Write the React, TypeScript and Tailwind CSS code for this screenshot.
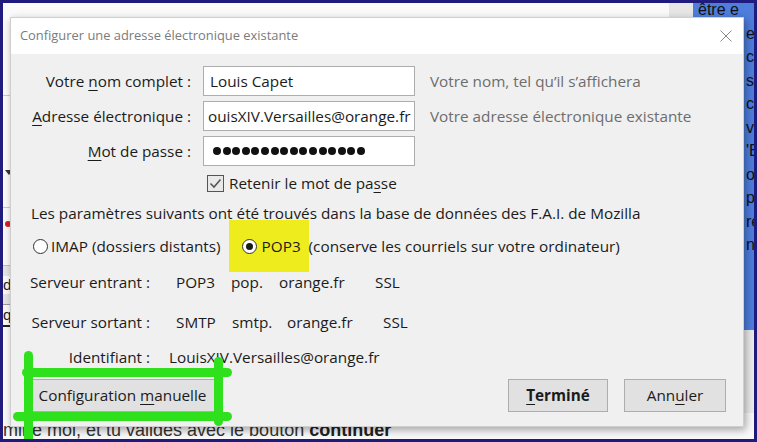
import React from "react";

const dots = Array.from({ length: 16 }, (_, i) => i);

function Mn({ children }: { children: React.ReactNode }) {
  return <span className="underline decoration-1 underline-offset-[3px]">{children}</span>;
}

function FieldRow({
  label,
  hint,
  children,
}: {
  label: React.ReactNode;
  hint?: string;
  children: React.ReactNode;
}) {
  return (
    <div className="flex h-[30px] items-center">
      <div className="w-[180px] whitespace-nowrap text-right">{label}</div>
      <div className="ml-[12px] flex h-[30px] w-[212px] items-center overflow-hidden border border-[#adadad] bg-white">
        {children}
      </div>
      {hint ? <span className="ml-[15px] whitespace-nowrap text-[#6d6d6d]">{hint}</span> : null}
    </div>
  );
}

function Radio({ checked }: { checked?: boolean }) {
  return (
    <span className="flex h-[15px] w-[15px] shrink-0 items-center justify-center rounded-full border border-[#333] bg-white">
      {checked ? <span className="h-[7px] w-[7px] rounded-full bg-[#1a1a1a]" /> : null}
    </span>
  );
}

function Dialog() {
  return (
    <div className="absolute left-[7px] top-[14px] flex h-[410px] w-[734px] flex-col border border-[#cfcfcf] bg-[#f0f0f0] text-[15.3px] text-[#1b1b1b] shadow-[2px_3px_8px_rgba(0,0,0,0.35)]">
      <div className="flex h-[36px] items-center justify-between bg-white pl-[9px] pr-[11px]">
        <span className="text-[12.9px] text-[#7b7b7b]">Configurer une adresse électronique existante</span>
        <svg width="12" height="12" viewBox="0 0 12 12" className="text-[#8a8a8a]">
          <path d="M0.5 0.5 L11.5 11.5 M11.5 0.5 L0.5 11.5" stroke="currentColor" strokeWidth="1" fill="none" />
        </svg>
      </div>

      <div className="flex flex-col pt-[12px]">
        <div className="flex flex-col gap-[5px]">
          <FieldRow
            label={
              <>
                Votre <Mn>n</Mn>om complet :
              </>
            }
            hint="Votre nom, tel qu’il s’affichera"
          >
            <span className="pl-[6px]">Louis Capet</span>
          </FieldRow>
          <FieldRow
            label={
              <>
                <Mn>A</Mn>dresse électronique :
              </>
            }
            hint="Votre adresse électronique existante"
          >
            {/* field scrolled to the end: the first letter is out of view */}
            <div className="ml-[4px] overflow-hidden">
              <span className="-ml-[8px] block whitespace-nowrap">LouisXIV.Versailles@orange.fr</span>
            </div>
          </FieldRow>
          <FieldRow
            label={
              <>
                <Mn>M</Mn>ot de passe :
              </>
            }
          >
            <div className="flex gap-[1.6px] pl-[9px]">
              {dots.map((d) => (
                <span key={d} className="h-[8px] w-[8px] rounded-full bg-[#111]" />
              ))}
            </div>
          </FieldRow>
        </div>

        <div className="mt-[7px] flex h-[20px] items-center pl-[196px]">
          <span className="flex h-[17px] w-[17px] items-center justify-center border border-[#555] bg-[#e9e9e9]">
            <svg width="13" height="11" viewBox="0 0 13 11">
              <path d="M1.5 5.5 L5 9 L11.5 1.5" stroke="#555" strokeWidth="1.6" fill="none" />
            </svg>
          </span>
          <span className="ml-[5px]">
            Retenir le mot de pa<Mn>s</Mn>se
          </span>
        </div>

        <div className="mt-[10px] flex h-[20px] items-center whitespace-nowrap pl-[20px]">
          Les paramètres suivants ont été trouvés dans la base de données des F.A.I. de Mozilla
        </div>

        <div className="mt-[11px] flex h-[24px] items-center whitespace-nowrap pl-[22px]">
          <Radio />
          <span className="ml-[3px]">IMAP (dossiers distants)</span>
          <span className="ml-[8px] -my-[14px] flex h-[52px] w-[80px] shrink-0 items-center bg-[#eeec1c] pl-[13px]">
            <Radio checked />
            <span className="ml-[5px]">POP3</span>
          </span>
          <span>(conserve les courriels sur votre ordinateur)</span>
        </div>

        <div className="mt-[12px] flex h-[24px] items-center whitespace-nowrap">
          <span className="w-[139px] text-right">Serveur entrant :</span>
          <span className="ml-[26px] w-[55px]">POP3</span>
          <span className="w-[48px]">pop.</span>
          <span className="w-[96px]">orange.fr</span>
          <span>SSL</span>
        </div>

        <div className="mt-[16px] flex h-[24px] items-center whitespace-nowrap">
          <span className="w-[139px] text-right">Serveur sortant :</span>
          <span className="ml-[26px] w-[56px]">SMTP</span>
          <span className="w-[55px]">smtp.</span>
          <span className="w-[96px]">orange.fr</span>
          <span>SSL</span>
        </div>

        <div className="mt-[11px] flex h-[24px] items-center whitespace-nowrap">
          <span className="w-[139px] text-right">Identifiant :</span>
          <span className="ml-[19px]">LouisXIV.Versailles@orange.fr</span>
        </div>

        <div className="mt-[10px] flex h-[33px] items-stretch pl-[19px] pr-[17px]">
          <button className="w-[185px] whitespace-nowrap border border-[#adadad] bg-[#e1e1e1] text-[#1b1b1b]">
            Configuration <Mn>m</Mn>anuelle
          </button>
          <div className="flex-1" />
          <button className="w-[100px] border border-[#adadad] bg-[#e1e1e1] font-bold text-[#1b1b1b]">
            <Mn>T</Mn>erminé
          </button>
          <button className="ml-[16px] w-[102px] border border-[#adadad] bg-[#e1e1e1] text-[#1b1b1b]">
            Ann<Mn>u</Mn>ler
          </button>
        </div>
      </div>
    </div>
  );
}

const blueLines = ["e", "ci", "s", "c", "ve", "'E", "o", "p", "re", "ne"];

function Background() {
  return (
    <div className="flex h-full flex-col">
      <div className="flex flex-1">
        <div className="flex w-[666px] flex-col bg-[#fafafa]">
          <div className="h-[92px]" />
          <div className="h-px w-[8px] bg-[#c8c8c8]" />
          <div className="h-[74px]" />
          <div className="ml-[2px] h-0 w-0 border-x-[4px] border-t-[5px] border-x-transparent border-t-[#333]" />
          <div className="h-[32px]" />
          <div className="h-px w-[8px] bg-[#c8c8c8]" />
          <div className="h-[13px]" />
          <div className="ml-[2px] h-[6px] w-[6px] rounded-full bg-[#d42020]" />
          <div className="h-[38px]" />
          <div className="h-px w-[8px] bg-[#bdbdbd]" />
          <div className="h-[10px] bg-[#e4e4e4]" />
          <div className="font-['Liberation_Sans',Arial,sans-serif] text-[15px] leading-[18px] text-[#222]">d</div>
          <div className="h-[10px] bg-[#e4e4e4]" />
          <div className="h-px w-[8px] bg-[#9a9a9a]" />
          <div className="font-['Liberation_Sans',Arial,sans-serif] text-[15px] leading-[20px] text-[#222]">q</div>
          <div className="h-[2px] w-[8px] bg-[#222]" />
        </div>
        <div className="w-[24px] bg-[#e6e6e6]" />
        <div className="flex w-[61px] flex-col">
          <div className="flex h-[327px] flex-col overflow-hidden bg-[#4e7ddc] font-['Liberation_Sans',Arial,sans-serif] text-[16px] leading-[23.5px] text-[#111]">
            <span className="-mt-[5px] whitespace-nowrap pl-[5px]">être e</span>
            {blueLines.map((l) => (
              <span key={l} className="whitespace-nowrap pl-[53px]">
                {l}
              </span>
            ))}
          </div>
          <div className="flex-1 bg-[#ececec]" />
        </div>
      </div>
      <div className="flex h-[26px] items-end whitespace-nowrap bg-[#fafafa] font-['Liberation_Sans',Arial,sans-serif] text-[18px] leading-[22px] text-[#333]">
        <span className="-mb-[2px]">
          mine moi, et tu valides avec le bouton <b className="text-[#222]">continuer</b>
        </span>
      </div>
    </div>
  );
}

function GreenMarks() {
  return (
    <>
      <div className="absolute left-[21px] top-[348px] h-[100px] w-[9px] rounded-full bg-[#2fe11d]" />
      <div className="absolute left-[19px] top-[365px] h-[9px] w-[210px] rounded-full bg-[#2fe11d]" />
      <div className="absolute left-[211px] top-[354px] h-[69px] w-[9px] rounded-full bg-[#2fe11d]" />
      <div className="absolute left-[10px] top-[409px] h-[9px] w-[219px] rounded-full bg-[#2fe11d]" />
    </>
  );
}

export default function App() {
  return (
    <div
      className="relative h-[442px] w-[757px] overflow-hidden border-[3px] border-[#1f1b7c] bg-white"
      style={{ fontFamily: "'Open Sans', 'Noto Sans', sans-serif" }}
    >
      <Background />
      <Dialog />
      <GreenMarks />
    </div>
  );
}
